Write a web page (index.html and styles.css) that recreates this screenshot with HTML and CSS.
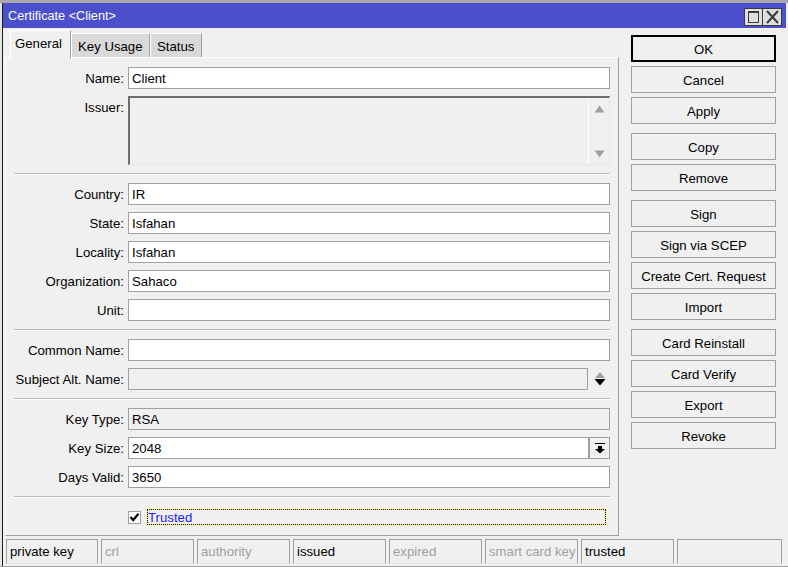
FILE: index.html
```html
<!DOCTYPE html>
<html>
<head>
<meta charset="utf-8">
<title>Certificate</title>
<link rel="stylesheet" href="styles.css">
</head>
<body>
<div class="window">
  <div class="titlebar">
    <span class="title">Certificate &lt;Client&gt;</span>
    <div class="tb-btns">
      <span class="tb-btn"><svg width="17" height="16" viewBox="0 0 17 16"><rect x="3.5" y="2.5" width="10" height="11" fill="none" stroke="#3a3a3a" stroke-width="1"/><rect x="3" y="2" width="11" height="2" fill="#3a3a3a"/></svg></span>
      <span class="tb-btn"><svg width="17" height="16" viewBox="0 0 17 16"><path d="M3 2 L14 14 M14 2 L3 14" stroke="#3a3a3a" stroke-width="2" fill="none"/></svg></span>
    </div>
  </div>
  <div class="main">
    <div class="left">
      <div class="tabs">
        <div class="tab active t-general">General</div>
        <div class="tab t-key">Key Usage</div>
        <div class="tab t-status">Status</div>
      </div>
      <div class="panel">
        <div class="row first"><span class="lbl">Name:</span><div class="field">Client</div></div>
        <div class="row issuer"><span class="lbl">Issuer:</span>
          <div class="area">
            <div class="area-body"></div>
            <div class="area-scroll">
              <svg width="11" height="8" viewBox="0 0 11 8"><polygon points="0.5,7.5 10.5,7.5 5.5,0.5" fill="#a0a0a0"/></svg>
              <svg width="11" height="8" viewBox="0 0 11 8"><polygon points="0.5,0.5 10.5,0.5 5.5,7.5" fill="#a0a0a0"/></svg>
            </div>
          </div>
        </div>
        <div class="sep"></div>
        <div class="row"><span class="lbl">Country:</span><div class="field">IR</div></div>
        <div class="row"><span class="lbl">State:</span><div class="field">Isfahan</div></div>
        <div class="row"><span class="lbl">Locality:</span><div class="field">Isfahan</div></div>
        <div class="row"><span class="lbl">Organization:</span><div class="field">Sahaco</div></div>
        <div class="row"><span class="lbl">Unit:</span><div class="field"></div></div>
        <div class="sep"></div>
        <div class="row"><span class="lbl">Common Name:</span><div class="field"></div></div>
        <div class="row"><span class="lbl">Subject Alt. Name:</span><div class="field disabled short"></div>
          <span class="updown"><svg width="12" height="16" viewBox="0 0 12 16"><polygon points="1,7 11,7 6,1" fill="#a0a0a0"/><polygon points="0.5,8 11.5,8 6,14.5" fill="#000"/></svg></span>
        </div>
        <div class="sep"></div>
        <div class="row"><span class="lbl">Key Type:</span><div class="field disabled">RSA</div></div>
        <div class="row"><span class="lbl">Key Size:</span><div class="field drop">2048</div>
          <span class="dropbtn"><svg width="10" height="11" viewBox="0 0 10 11"><rect x="0" y="0" width="10" height="1" fill="#000"/><rect x="3" y="3" width="4" height="3" fill="#000"/><polygon points="0,6 10,6 5,10.5" fill="#000"/></svg></span>
        </div>
        <div class="row"><span class="lbl">Days Valid:</span><div class="field">3650</div></div>
        <div class="sep"></div>
        <div class="check-row">
          <span class="checkbox"><svg width="11" height="11" viewBox="0 0 11 11"><path d="M1.5 5 L4.2 8 L9.5 1.8" stroke="#000" stroke-width="2.2" fill="none"/></svg></span>
          <div class="focus"><span class="focus-in">Trusted</span></div>
        </div>
      </div>
    </div>
    <div class="btns">
      <div class="btn default">OK</div>
      <div class="btn">Cancel</div>
      <div class="btn">Apply</div>
      <div class="btn grp">Copy</div>
      <div class="btn">Remove</div>
      <div class="btn grp">Sign</div>
      <div class="btn">Sign via SCEP</div>
      <div class="btn">Create Cert. Request</div>
      <div class="btn">Import</div>
      <div class="btn grp">Card Reinstall</div>
      <div class="btn">Card Verify</div>
      <div class="btn">Export</div>
      <div class="btn">Revoke</div>
    </div>
  </div>
  <div class="statusbar">
    <div class="cell c1">private key</div>
    <div class="cell off">crl</div>
    <div class="cell off">authority</div>
    <div class="cell">issued</div>
    <div class="cell off">expired</div>
    <div class="cell off">smart card key</div>
    <div class="cell">trusted</div>
    <div class="cell last"></div>
  </div>
</div>
</body>
</html>
```
FILE: styles.css
```css
* { box-sizing: border-box; }

body {
  margin: 0;
  background: #f0f0f0;
  font-family: "Liberation Sans", Arial, sans-serif;
  font-size: 13.2px;
  color: #000;
}

.window {
  width: 788px;
  height: 567px;
  display: flex;
  flex-direction: column;
  border-top: 3px solid #a9a9a9;
  padding-left: 3px;
  padding-right: 2px;
  background: linear-gradient(to right, #e4e4e4 0 2px, #1e1e1e 2px 3px, #f0f0f0 3px);
  border-bottom: 1px solid #a0a0a0;
  overflow: hidden;
}

.titlebar {
  height: 25px;
  flex: none;
  background: #4b4fcc;
  color: #fff;
  display: flex;
  align-items: center;
  padding-left: 5px;
  font-size: 12.7px;
}

.title { padding-top: 1px; }

.tb-btns {
  margin-left: auto;
  margin-right: 4px;
  display: flex;
  align-self: flex-start;
  margin-top: 5px;
}

.tb-btn {
  width: 19px;
  height: 18px;
  background: #dedede;
  border: 1px solid #3a3a3a;
  display: flex;
  align-items: center;
  justify-content: center;
}
.tb-btn + .tb-btn { border-left: none; width: 19px; }

.main {
  height: 510px;
  flex: none;
  display: flex;
  padding-left: 2px;
}

.left {
  width: 614px;
  display: flex;
  flex-direction: column;
}

.tabs {
  height: 29px;
  display: flex;
  align-items: flex-start;
  padding-left: 5px;
  padding-top: 2px;
  position: relative;
  z-index: 1;
}

.tab {
  height: 24px;
  margin-top: 3px;
  background: #d9d9d9;
  border-left: 1px solid #fff;
  border-top: 1px solid #fff;
  border-right: 1px solid #a0a0a0;
  padding-left: 6px;
  padding-top: 1px;
  line-height: 23px;
  white-space: nowrap;
}

.tab.active {
  height: 28px;
  margin-top: 0;
  background: #f0f0f0;
  line-height: 24px;
  padding-left: 4px;
}

.t-general { width: 61px; }
.t-key { width: 79px; }
.t-status { width: 52px; }

.panel {
  height: 479px;
  border: 1px solid;
  border-color: #fff #a0a0a0 #a0a0a0 #fff;
  padding: 9px 8px 0 0;
  display: flex;
  flex-direction: column;
}

.row {
  display: flex;
  align-items: center;
  height: 22px;
  margin-top: 7px;
}
.row.first, .sep + .row { margin-top: 0; }

.lbl {
  width: 118px;
  text-align: right;
  margin-right: 4px;
  white-space: nowrap;
  flex: none;
  padding-top: 1px;
}

.field {
  width: 482px;
  height: 22px;
  background: #fff;
  border: 1px solid #a0a0a0;
  padding-left: 3px;
  padding-top: 1px;
  line-height: 20px;
}
.field.disabled { background: #f0f0f0; }
.field.short { width: 460px; }
.field.drop { width: 461px; }

.row.issuer {
  height: 69px;
  align-items: flex-start;
}
.row.issuer .lbl { line-height: 22px; }

.area {
  width: 482px;
  height: 69px;
  display: flex;
  border: 1px solid;
  border-width: 2px 1px 1px 2px;
  border-color: #6e6e6e #e6e6e6 #e6e6e6 #6e6e6e;
  background: #f0f0f0;
}
.area-body { flex: 1; }
.area-scroll {
  width: 21px;
  border-left: 1px solid #fff;
  display: flex;
  flex-direction: column;
  align-items: center;
  justify-content: space-between;
  padding: 7px 0 6px 1px;
}

.updown {
  width: 22px;
  display: flex;
  justify-content: center;
  padding-left: 2px;
}

.dropbtn {
  width: 21px;
  height: 22px;
  margin-left: 0;
  border: 1px solid #a0a0a0;
  display: flex;
  align-items: center;
  justify-content: center;
  padding-top: 1px;
}

.sep {
  height: 2px;
  width: 596px;
  margin: 8px 0 8px 8px;
  border-top: 1px solid #bcbcbc;
  border-bottom: 1px solid #fff;
  flex: none;
}

.check-row {
  display: flex;
  align-items: center;
  height: 16px;
  margin-top: 3px;
  padding-left: 122px;
}

.checkbox {
  width: 13px;
  height: 13px;
  background: #fff;
  border: 1px solid #a0a0a0;
  display: flex;
  align-items: center;
  justify-content: center;
  margin-right: 6px;
  margin-top: 1px;
}

.focus {
  width: 459px;
  height: 16px;
  border: 1px dotted #000;
  background: #ffff00;
  display: flex;
}
.focus-in {
  flex: 1;
  background: #f0f0f0;
  color: #2020ff;
  line-height: 14px;
  padding-top: 1px;
}

.btns {
  width: 145px;
  margin-left: 12px;
  margin-top: 3px;
  display: flex;
  flex-direction: column;
}

.btn {
  height: 27px;
  margin-top: 4px;
  border: 1px solid #a0a0a0;
  text-align: center;
  line-height: 25px;
  padding-top: 1px;
  white-space: nowrap;
}
.btn.grp { margin-top: 9px; }
.btn.default { border-color: #000; box-shadow: inset 0 0 0 1px #000; }

.statusbar {
  flex: 1;
  display: flex;
  padding-top: 1px;
  padding-left: 3px;
  gap: 3px;
  padding-right: 4px;
}

.cell {
  width: 93px;
  height: 25px;
  flex: none;
  border: 1px solid #a0a0a0;
  border-bottom-color: #e4e4e4;
  padding-left: 3px;
  line-height: 23px;
  white-space: nowrap;
  overflow: hidden;
}
.cell.c1 { width: 92px; }
.cell.off { color: #a0a0a0; }
.cell.last { flex: 1; }
```
